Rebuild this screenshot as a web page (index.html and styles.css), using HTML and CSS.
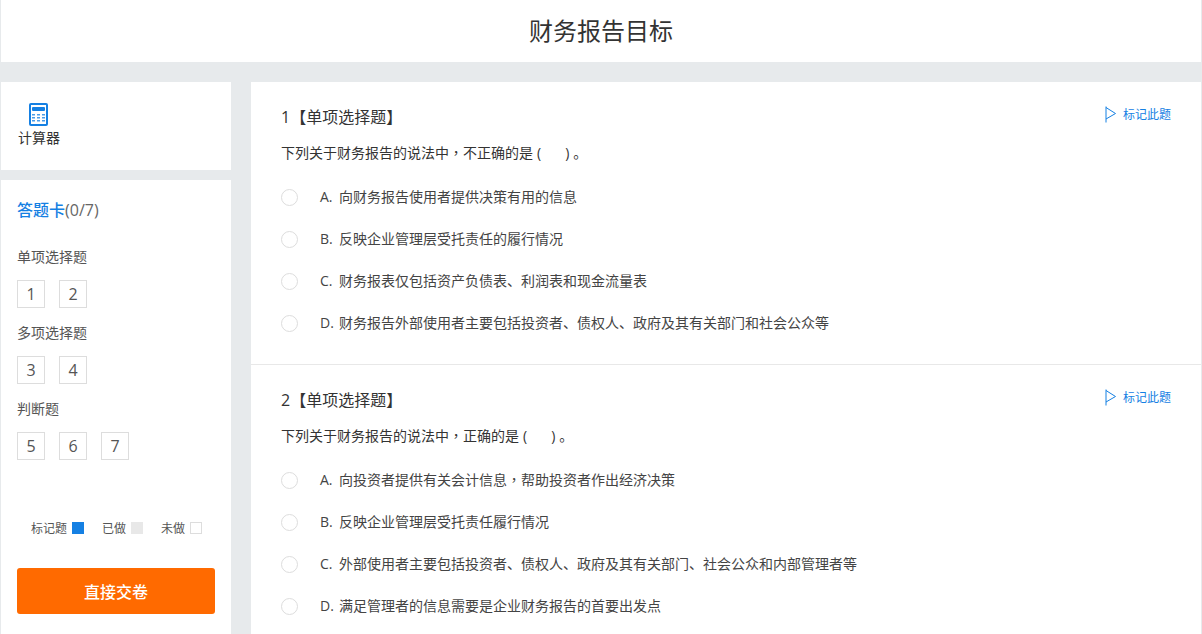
FILE: index.html
```html
<!DOCTYPE html>
<html lang="zh-CN">
<head>
<meta charset="utf-8">
<title>财务报告目标</title>
<link rel="stylesheet" href="styles.css">
</head>
<body>
<div class="page">
  <header class="top"><h1>财务报告目标</h1></header>
  <div class="layout">
    <aside class="side">
      <section class="calc">
        <svg class="calc-icon" width="19" height="23" viewBox="0 0 19 23">
          <rect x="0" y="0" width="19" height="23" rx="2" fill="#1580e3"/>
          <rect x="2" y="2" width="15" height="19" fill="#fff"/>
          <rect x="3" y="4" width="13" height="4" rx="1" fill="#1580e3"/>
          <path d="M3 11h3v1.5H3zM8 11h3v1.5H8zM13 11h3v1.5h-3zM3 14h3v1.5H3zM8 14h3v1.5H8zM13 14h3v1.5h-3zM3 17h3v1.5H3zM8 17h3v1.5H8zM13 17h3v1.5h-3z" fill="#4a9ce8"/>
        </svg>
        <span class="calc-label">计算器</span>
      </section>
      <section class="card">
        <h2 class="card-title"><b>答题卡</b>(0/7)</h2>
        <div class="group-name">单项选择题</div>
        <div class="nums"><span>1</span><span>2</span></div>
        <div class="group-name">多项选择题</div>
        <div class="nums"><span>3</span><span>4</span></div>
        <div class="group-name">判断题</div>
        <div class="nums"><span>5</span><span>6</span><span>7</span></div>
        <div class="legend">
          <span>标记题<i class="sw sw-mark"></i></span>
          <span>已做<i class="sw sw-done"></i></span>
          <span>未做<i class="sw sw-todo"></i></span>
        </div>
        <button class="submit" type="button">直接交卷</button>
      </section>
    </aside>
    <main class="main">
      <article class="q q1">
        <a class="flag"><svg width="12" height="17" viewBox="0 0 12 17"><path d="M1 .5v16M1 1.5l9.5 6L1 13" fill="none" stroke="#1580e3" stroke-width="1"/></svg>标记此题</a>
        <h3 class="q-title">1【单项选择题】</h3>
        <p class="q-text">下列关于财务报告的说法中<span class="cp" lang="zh-TW">，</span>不正确的是<span class="paren">(<span class="blank"></span>)</span>。</p>
        <ul class="opts">
          <li><i class="radio"></i><em>A.</em><span class="opt-text">向财务报告使用者提供决策有用的信息</span></li>
          <li><i class="radio"></i><em>B.</em><span class="opt-text">反映企业管理层受托责任的履行情况</span></li>
          <li><i class="radio"></i><em>C.</em><span class="opt-text">财务报表仅包括资产负债表、利润表和现金流量表</span></li>
          <li><i class="radio"></i><em>D.</em><span class="opt-text">财务报告外部使用者主要包括投资者、债权人、政府及其有关部门和社会公众等</span></li>
        </ul>
      </article>
      <article class="q">
        <a class="flag"><svg width="12" height="17" viewBox="0 0 12 17"><path d="M1 .5v16M1 1.5l9.5 6L1 13" fill="none" stroke="#1580e3" stroke-width="1"/></svg>标记此题</a>
        <h3 class="q-title">2【单项选择题】</h3>
        <p class="q-text">下列关于财务报告的说法中<span class="cp" lang="zh-TW">，</span>正确的是<span class="paren">(<span class="blank"></span>)</span>。</p>
        <ul class="opts">
          <li><i class="radio"></i><em>A.</em><span class="opt-text">向投资者提供有关会计信息<span class="cp" lang="zh-TW">，</span>帮助投资者作出经济决策</span></li>
          <li><i class="radio"></i><em>B.</em><span class="opt-text">反映企业管理层受托责任履行情况</span></li>
          <li><i class="radio"></i><em>C.</em><span class="opt-text">外部使用者主要包括投资者、债权人、政府及其有关部门、社会公众和内部管理者等</span></li>
          <li><i class="radio"></i><em>D.</em><span class="opt-text">满足管理者的信息需要是企业财务报告的首要出发点</span></li>
        </ul>
      </article>
    </main>
  </div>
</div>
</body>
</html>
```
FILE: styles.css
```css
* { box-sizing: border-box; }
html, body { margin: 0; height: 634px; overflow: hidden; }
body {
  background: #e7eaec;
  color: #333;
  font-family: "Open Sans", "Noto Sans CJK SC", sans-serif;
  font-size: 14px;
}
.page { padding: 0 1px; }
.top {
  height: 62px;
  background: #fff;
  display: flex;
  align-items: center;
  justify-content: center;
}
.top h1 { margin: 0; font-size: 24px; font-weight: 400; line-height: 62px; color: #333; }
.layout { display: flex; gap: 20px; margin-top: 20px; }
.side { width: 230px; flex: none; display: flex; flex-direction: column; gap: 10px; }
.calc {
  height: 88px;
  background: #fff;
  padding: 21px 0 0 17px;
  display: flex;
  flex-direction: column;
  align-items: flex-start;
}
.calc-icon { margin-left: 11px; display: block; }
.calc-label { font-size: 14px; line-height: 20px; margin-top: 2px; color: #333; }
.card { background: #fff; padding: 18px 16px 0 16px; height: 460px; }
.card-title { margin: 0 0 25px; font-size: 16px; font-weight: 400; line-height: 24px; color: #666; }
.card-title b { font-weight: 500; color: #1580e3; }
.group-name { font-size: 14px; line-height: 20px; color: #555; margin-bottom: 13px; }
.nums { display: flex; gap: 14px; margin-bottom: 15px; }
.nums span {
  width: 28px;
  height: 28px;
  border: 1px solid #ddd;
  display: flex;
  align-items: center;
  justify-content: center;
  font-size: 16px;
  color: #555;
}
.legend {
  display: flex;
  justify-content: flex-end;
  gap: 18px;
  margin: 58px 13px 0 0;
  height: 20px;
  align-items: center;
  font-size: 12px;
  color: #555;
}
.legend span { display: flex; align-items: center; gap: 5px; }
.sw { width: 12px; height: 12px; display: block; }
.sw-mark { background: #1580e3; }
.sw-done { background: #e8e8e8; }
.sw-todo { border: 1px solid #ddd; background: #fff; }
.submit {
  display: block;
  width: 198px;
  height: 46px;
  margin-top: 30px;
  border: 0;
  border-radius: 3px;
  background: #ff6a00;
  color: #fff;
  font: inherit;
  font-size: 16px;
  font-weight: 500;
}
.main { flex: 1; background: #fff; min-width: 0; }
.q { position: relative; padding: 23px 30px 0 30px; height: 282px; }
.q1 { border-bottom: 1px solid #e8e8e8; height: 283px; }
.flag {
  position: absolute;
  top: 23px;
  right: 30px;
  display: flex;
  align-items: center;
  gap: 6px;
  font-size: 12px;
  color: #1580e3;
}
.q-title { margin: 0; font-size: 16px; font-weight: 400; line-height: 24px; color: #333; }
.q-text { margin: 11px 0 0; font-size: 14px; line-height: 24px; color: #333; }
.cp { font-family: "Noto Sans CJK TC", sans-serif; }
.paren { margin: 0 4px; }
.blank { display: inline-block; width: 24px; }
.opts { list-style: none; margin: 11px 0 0; padding: 0; }
.opts li { display: flex; align-items: center; height: 42px; font-size: 14px; color: #444; }
.opts em { font-style: normal; width: 19px; padding-bottom: 1px; }
.opt-text { padding-bottom: 2px; }
.radio {
  width: 17px;
  height: 17px;
  border: 1px solid #ddd;
  border-radius: 50%;
  margin-right: 22px;
  flex: none;
}
```
